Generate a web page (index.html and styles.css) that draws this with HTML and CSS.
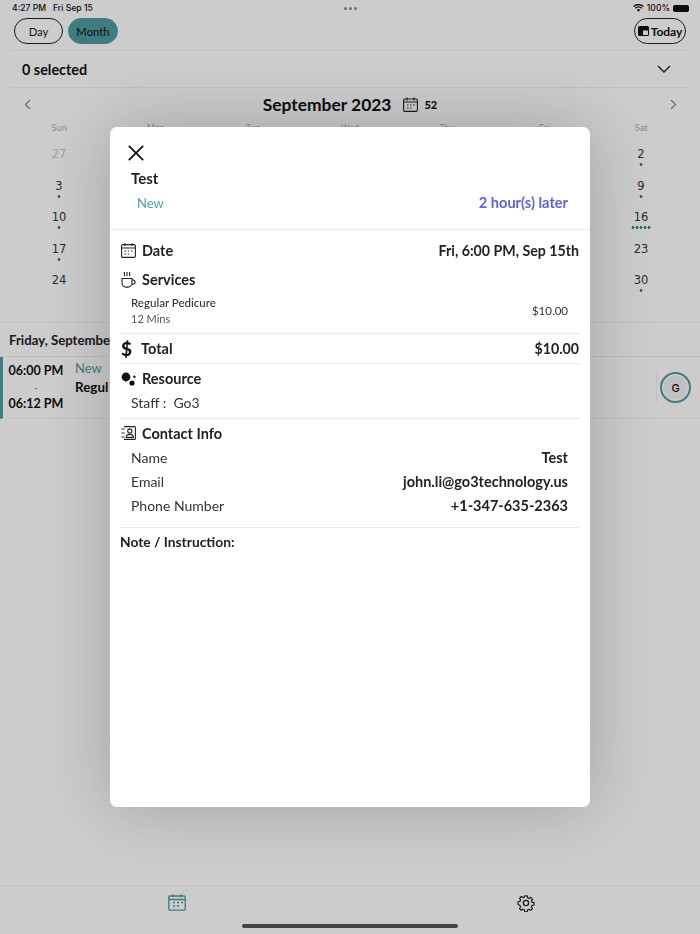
FILE: index.html
```html
<!DOCTYPE html>
<html lang="en">
<head>
<meta charset="utf-8">
<title>Appointment</title>
<link rel="stylesheet" href="styles.css">
</head>
<body>
<div class="app">
  <div class="status">
    <span class="status-time">4:27 PM&nbsp;&nbsp; Fri Sep 15</span>
    <span class="status-dots"><i></i><i></i><i></i></span>
    <span class="status-right">
      <svg width="11" height="8" viewBox="0 0 11 8"><path d="M0.5 2.6a7 7 0 0 1 10 0M2.2 4.3a4.6 4.6 0 0 1 6.6 0" fill="none" stroke="#111" stroke-width="1.3"/><path d="M3.8 5.8a2.4 2.4 0 0 1 3.4 0L5.5 7.8z" fill="#111"/></svg>
      <span>100%</span>
      <span class="battery"></span>
    </span>
  </div>
  <div class="toolbar">
    <button class="pill">Day</button>
    <button class="pill pill-on">Month</button>
    <button class="pill today">
      <svg width="11" height="10" viewBox="0 0 11 10"><rect width="11" height="10" rx="1.5" fill="#111"/><rect x="5" y="4.5" width="5" height="4.5" fill="#fff"/></svg>
      Today
    </button>
  </div>
  <div class="selected">
    <span>0 selected</span>
    <svg width="14" height="8" viewBox="0 0 14 8"><path d="M1 1l6 6 6-6" fill="none" stroke="#222" stroke-width="1.4"/></svg>
  </div>
  <div class="month-head">
    <svg width="7" height="11" viewBox="0 0 7 11"><path d="M6 1L1.5 5.5 6 10" fill="none" stroke="#888" stroke-width="1.2"/></svg>
    <div class="month-title">
      <span>September 2023</span>
      <svg width="15" height="15" viewBox="0 0 15 15"><rect x=".6" y="2" width="13.8" height="12.4" rx="1.2" fill="none" stroke="#222" stroke-width="1.1"/><path d="M.6 5h13.8M4 .5v3M11 .5v3M4 8h1.5M7 8h1.5M10 8h1.5M4 11h1.5M7 11h1.5" stroke="#222" stroke-width="1.1"/></svg>
      <b>52</b>
    </div>
    <svg width="7" height="11" viewBox="0 0 7 11"><path d="M1 1l4.5 4.5L1 10" fill="none" stroke="#888" stroke-width="1.2"/></svg>
  </div>
  <div class="cal">
    <span class="wd">Sun</span><span class="wd">Mon</span><span class="wd">Tue</span><span class="wd">Wed</span><span class="wd">Thu</span><span class="wd">Fri</span><span class="wd">Sat</span>
    <span class="d muted">27</span><span class="d"></span><span class="d"></span><span class="d"></span><span class="d"></span><span class="d"></span><span class="d">2<i class="dot"></i></span>
    <span class="d">3<i class="dot"></i></span><span class="d"></span><span class="d"></span><span class="d"></span><span class="d"></span><span class="d"></span><span class="d">9<i class="dot"></i></span>
    <span class="d">10<i class="dot"></i></span><span class="d"></span><span class="d"></span><span class="d"></span><span class="d"></span><span class="d"></span><span class="d">16<i class="dot dot5"></i></span>
    <span class="d">17<i class="dot"></i></span><span class="d"></span><span class="d"></span><span class="d"></span><span class="d"></span><span class="d"></span><span class="d">23</span>
    <span class="d">24</span><span class="d"></span><span class="d"></span><span class="d"></span><span class="d"></span><span class="d"></span><span class="d">30<i class="dot"></i></span>
  </div>
  <div class="day-head"><span>Friday, Septembe</span></div>
  <div class="appt">
    <div class="appt-time"><b>06:00 PM</b><span>-</span><b>06:12 PM</b></div>
    <div class="appt-info"><span class="appt-new">New</span><b>Regul</b></div>
    <div class="avatar-wrap"><div class="avatar">G</div></div>
  </div>
  <div class="spacer"></div>
  <div class="tabs">
    <svg width="18" height="17" viewBox="0 0 18 17"><rect x=".8" y="2" width="16.4" height="14.2" rx="1" fill="none" stroke="#4f9ca1" stroke-width="1.3"/><path d="M.8 5.5h16.4M5 .3v3M13 .3v3M5 8.5h2M9 8.5h2M13 8.5h2M5 12h2M9 12h2" stroke="#4f9ca1" stroke-width="1.3"/></svg>
    <svg width="18" height="18" viewBox="0 0 18 18"><path d="M7.6 1h2.8l.4 2.2 1.5.7 1.9-1.2 2 2-1.2 1.9.7 1.5 2.2.4v2.8l-2.2.4-.7 1.5 1.2 1.9-2 2-1.9-1.2-1.5.7-.4 2.2H7.6l-.4-2.2-1.5-.7-1.9 1.2-2-2 1.2-1.9-.7-1.5L.1 10.4V7.6l2.2-.4.7-1.5-1.2-1.9 2-2 1.9 1.2 1.5-.7z" transform="translate(.9 .9) scale(.9)" fill="none" stroke="#222" stroke-width="1.3" stroke-linejoin="round"/><circle cx="9" cy="9" r="2.6" fill="none" stroke="#222" stroke-width="1.3"/></svg>
  </div>
  <div class="home-wrap"><div class="home"></div></div>
</div>

<div class="backdrop">
  <div class="modal">
    <div class="close-row">
      <svg width="16" height="16" viewBox="0 0 16 16"><path d="M.8.8l14.4 14.4M15.2.8L.8 15.2" stroke="#111" stroke-width="1.7" fill="none"/></svg>
    </div>
    <div class="m-name">Test</div>
    <div class="m-status"><span class="m-new">New</span><span class="m-later">2 hour(s) later</span></div>
    <div class="m-body">
      <div class="m-head m-date">
        <svg class="ic" width="15" height="15" viewBox="0 0 15 15"><rect x=".6" y="1.6" width="13.8" height="12.8" rx="1.2" fill="none" stroke="#222" stroke-width="1.1"/><path d="M.6 5h13.8M4 .3v2.6M11 .3v2.6M3.5 8h1.5M6.7 8h1.5M10 8h1.5M3.5 11h1.5M6.7 11h1.5" stroke="#222" stroke-width="1.1"/></svg>
        <span class="m-label">Date</span><span class="m-val">Fri, 6:00 PM, Sep 15th</span>
      </div>
      <div class="m-head m-services">
        <svg class="ic" width="15" height="17" viewBox="0 0 15 17"><path d="M1 7.5h10v4.6a4 4 0 0 1-4 4H5a4 4 0 0 1-4-4zM11 9h1a2 2 0 0 1 0 4.2h-1.2M3.4 1v4M6 1v4M8.6 1v4" fill="none" stroke="#222" stroke-width="1.1"/></svg>
        <span class="m-label">Services</span>
      </div>
      <div class="m-svc">
        <div><div class="svc-name">Regular Pedicure</div><div class="svc-dur">12 Mins</div></div>
        <div class="svc-price">$10.00</div>
      </div>
      <div class="m-head m-total">
        <span class="ic dollar">$</span>
        <span class="m-label">Total</span><span class="m-val">$10.00</span>
      </div>
      <div class="m-head m-res">
        <svg class="ic" width="15" height="14" viewBox="0 0 15 14"><circle cx="5" cy="5" r="4.4" fill="#111"/><circle cx="11" cy="11" r="2.6" fill="#111"/><circle cx="13.4" cy="4.8" r="1.2" fill="#111"/></svg>
        <span class="m-label">Resource</span>
      </div>
      <div class="m-staff">Staff :&nbsp; Go3</div>
      <div class="m-head m-contact">
        <svg class="ic" width="15" height="14" viewBox="0 0 15 14"><path d="M3 .6h10.4a1 1 0 0 1 1 1v10.8a1 1 0 0 1-1 1H3M.5 3h3M.5 7h3M.5 11h3" fill="none" stroke="#222" stroke-width="1.1"/><circle cx="8.8" cy="5" r="2.1" fill="none" stroke="#222" stroke-width="1.1"/><path d="M5.2 11.4c0-4 7.2-4 7.2 0z" fill="none" stroke="#222" stroke-width="1.1"/></svg>
        <span class="m-label">Contact Info</span>
      </div>
      <div class="m-contact-list">
        <div class="kv"><span>Name</span><b>Test</b></div>
        <div class="kv"><span>Email</span><b>john.li@go3technology.us</b></div>
        <div class="kv"><span>Phone Number</span><b>+1-347-635-2363</b></div>
      </div>
      <div class="m-note">Note / Instruction:</div>
    </div>
  </div>
</div>
</body>
</html>
```

FILE: styles.css
```css
* { box-sizing: border-box; }
html, body { margin: 0; height: 934px; overflow: hidden; }
body { font-family: "Lato", "Noto Sans", sans-serif; color: #111; background: #fff; }
.app { width: 700px; height: 934px; display: flex; flex-direction: column; }

.status { height: 18px; padding: 0 11px 2px 12px; display: grid; grid-template-columns: 1fr auto 1fr; align-items: center; font: 500 8.6px/10px "Inter", sans-serif; color: #111; }
.status-dots { display: flex; gap: 2px; }
.status-dots i { width: 3px; height: 3px; border-radius: 50%; background: #8a8a8a; }
.status-right { justify-self: end; display: flex; align-items: center; gap: 3px; }
.battery { width: 16px; height: 7px; background: #111; border-radius: 2px; }

.toolbar { height: 33px; margin: 0 10px; padding: 0 4px 7px; display: flex; gap: 5px; border-bottom: 1px solid #f0f0f0; }
.pill { width: 49px; height: 26px; border: 1px solid #222; border-radius: 13px; background: #fff; font: 400 11.3px "Lato", sans-serif; color: #222; padding: 0; }
.pill-on { width: 50px; background: #4f9ca1; border-color: #4f9ca1; color: #111; }
.today { margin-left: auto; width: 52px; display: flex; align-items: center; justify-content: center; gap: 2px; font-weight: 700; font-size: 12px; color: #111; }

.selected { height: 37px; margin: 0 10px; padding: 0 19px 0 12px; display: flex; align-items: center; justify-content: space-between; border-bottom: 1px solid #f0f0f0; font-size: 14.4px; font-weight: 700; color: #111; }

.month-head { height: 32px; padding: 0 23px 0 24px; display: flex; align-items: center; justify-content: space-between; }
.month-title { display: flex; align-items: center; margin-left: -1px; font-size: 17.4px; font-weight: 700; color: #111; }
.month-title svg { margin-left: 12px; }
.month-title b { margin-left: 6px; font-size: 11px; }

.cal { height: 203px; padding: 1px 10.5px 0; display: grid; grid-template-columns: repeat(7, 97px); grid-template-rows: 16px repeat(5, 31.5px); justify-items: center; border-bottom: 1px solid #f0f0f0; }
.wd { font: 400 8.5px/14px "Inter", sans-serif; color: #a9adb2; }
.d { font: 400 11.5px/16px "DejaVu Sans", sans-serif; color: #2f3840; padding-top: 9px; text-align: center; }
.d.muted { color: #c4c7cb; }
.dot { display: block; width: 4px; height: 3px; margin: 1px auto 0; background: radial-gradient(circle at center, #3f8a90 1.3px, transparent 1.7px) 0 0 / 4px 3px repeat-x; }
.dot5 { width: 20px; }

.day-head { height: 34px; padding: 0 9px; display: flex; align-items: center; font-size: 13.2px; font-weight: 700; color: #222; border-bottom: 1px solid #f0f0f0; white-space: nowrap; }
.appt { height: 62px; padding: 0 9px 0 6px; display: flex; align-items: center; border-left: 3px solid #4f9ca1; border-bottom: 1px solid #f0f0f0; }
.appt-time { flex: none; width: 54px; display: flex; flex-direction: column; align-items: center; font-size: 12.5px; line-height: 16.5px; white-space: nowrap; }
.appt-time span { color: #777; font-size: 10px; }
.appt-info { align-self: flex-start; margin-left: 12px; padding-top: 2px; display: flex; flex-direction: column; gap: 3px; font-size: 13.4px; line-height: 15px; white-space: nowrap; }
.appt-new { color: #4f9ca1; font-size: 13px; line-height: 18px; }
.avatar-wrap { margin-left: auto; height: 31px; padding-left: 3px; border-left: 1px solid #f0f0f0; }
.avatar { width: 31px; height: 31px; border-radius: 50%; background: #f0f0f0; border: 2px solid #4f9ca1; box-shadow: inset 0 0 0 1.5px #fff; display: flex; align-items: center; justify-content: center; font: 500 11px "Inter", sans-serif; }

.spacer { flex: 1; }
.tabs { height: 34px; border-top: 1px solid #f0f0f0; display: grid; grid-template-columns: 1fr 1fr; align-items: center; justify-items: center; padding-left: 2px; }
.home-wrap { height: 15px; padding-top: 5px; display: flex; justify-content: center; }
.home { width: 216px; height: 4px; border-radius: 2px; background: #555; }

.backdrop { position: fixed; inset: 0; background: rgba(0,0,0,.2); display: flex; justify-content: center; padding-top: 127px; }
.modal { width: 480px; height: 680px; background: #fff; border-radius: 7px; box-shadow: 0 0 70px rgba(0,0,0,.22); display: flex; flex-direction: column; }

.close-row { height: 42px; padding: 18px 0 0 18px; }
.m-name { height: 19px; padding-left: 21px; font-size: 15px; line-height: 19px; font-weight: 700; color: #222; }
.m-status { height: 42px; padding: 5px 22px 0 27px; display: flex; justify-content: space-between; align-items: flex-start; border-bottom: 1px solid #ebebeb; line-height: 20px; }
.m-new { color: #4fa3a8; font-size: 13px; }
.m-later { color: #5b5fe6; font-size: 14.6px; font-weight: 700; }

.m-body { padding: 0 10px; }
.m-head { display: flex; align-items: center; gap: 6px; font-size: 14.5px; font-weight: 700; color: #222; }
.ic { flex: none; margin-left: 1px; }
.m-label { flex: none; }
.m-val { margin-left: auto; margin-right: 1px; font-size: 14.2px; }
.m-date { height: 40px; }
.m-services { height: 20px; padding-bottom: 2px; }
.m-svc { height: 44px; padding: 3px 12px 7px 11px; display: flex; justify-content: space-between; align-items: center; border-bottom: 1px solid #ebebeb; }
.svc-name { font-size: 11.5px; line-height: 17px; font-weight: 500; color: #333; }
.svc-dur { font-size: 11px; line-height: 15px; color: #555; }
.svc-price { margin-top: 2px; font-size: 11.5px; color: #333; }
.m-total { height: 30px; border-bottom: 1px solid #ebebeb; }
.dollar { width: 13px; font-size: 19px; font-weight: 900; line-height: 1; color: #111; margin-right: 1px; }
.m-res { height: 30px; padding-bottom: 1px; }
.m-staff { height: 25px; padding: 0 11px; font-size: 14px; line-height: 18px; color: #333; border-bottom: 1px solid #ebebeb; }
.m-contact { height: 27px; padding-top: 1px; }
.m-contact-list { padding: 0 12px 8px 11px; border-bottom: 1px solid #ebebeb; }
.kv { height: 24.3px; padding-bottom: 2px; display: flex; justify-content: space-between; align-items: center; font-size: 14px; color: #333; }
.kv b { color: #222; font-weight: 700; font-size: 14.5px; }
.m-note { height: 28px; display: flex; align-items: center; font-size: 13.8px; font-weight: 700; color: #222; }
```
